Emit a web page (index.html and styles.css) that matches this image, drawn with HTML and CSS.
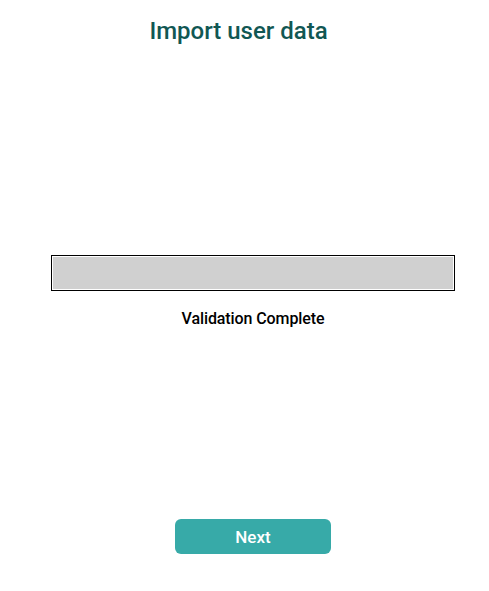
FILE: index.html
```html
<!DOCTYPE html>
<html>
<head>
<meta charset="utf-8">
<link rel="stylesheet" href="styles.css">
</head>
<body>
<div class="page">
  <h1 class="title">Import user data</h1>
  <div class="content">
    <div class="progress"><div class="progress-fill"></div></div>
    <p class="status">Validation Complete</p>
    <button class="next-btn">Next</button>
  </div>
</div>
</body>
</html>
```
FILE: styles.css
```css
html, body {
  margin: 0;
  padding: 0;
  background: #ffffff;
}
body {
  font-family: Roboto, "Liberation Sans", sans-serif;
}
.page {
  width: 489px;
  height: 591px;
  display: flex;
  flex-direction: column;
}
.title {
  margin: 17px 12px 0 0;
  font-size: 24px;
  line-height: 28px;
  font-weight: 500;
  color: #115753;
  text-align: center;
}
.content {
  display: flex;
  flex-direction: column;
  align-items: center;
  padding: 0 34px 0 51px;
}
.progress {
  margin-top: 210px;
  width: 404px;
  box-sizing: border-box;
  height: 36px;
  border: 1px solid #000000;
  padding: 1px;
  background: #ffffff;
}
.progress-fill {
  height: 100%;
  background: #d0d0d0;
}
.status {
  margin: 18px 0 0 0;
  font-size: 16px;
  line-height: 19px;
  font-weight: 500;
  letter-spacing: -0.1px;
  color: #000000;
}
.next-btn {
  margin-top: 191px;
  width: 156px;
  height: 35px;
  border: none;
  border-radius: 6px;
  background: #37aaa8;
  color: #ffffff;
  font-family: Roboto, "Liberation Sans", sans-serif;
  font-size: 17px;
  font-weight: 500;
  padding: 0;
}
```
